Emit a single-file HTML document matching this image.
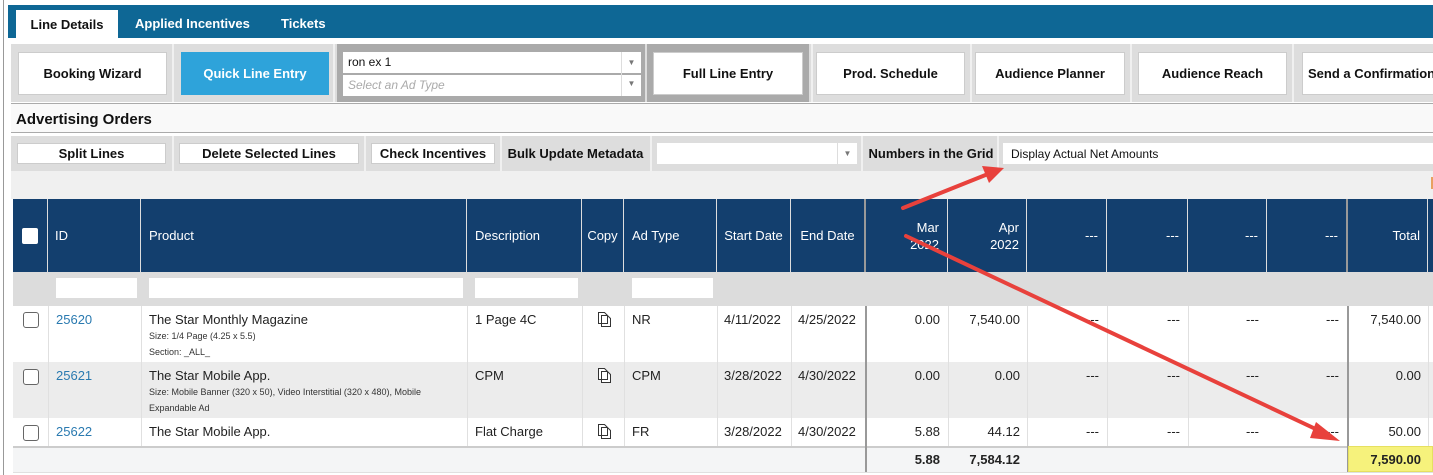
<!DOCTYPE html>
<html><head><meta charset="utf-8"><style>
*{box-sizing:border-box;margin:0;padding:0}
body{width:1433px;height:475px;background:#fff;font-family:"Liberation Sans",sans-serif;position:relative;overflow:hidden;color:#111}
.a{position:absolute}
.btn{position:absolute;background:#fff;border:1px solid #ccc;font-weight:bold;font-size:13px;display:flex;align-items:center;justify-content:center;white-space:nowrap;overflow:hidden}
.lbl{position:absolute;font-weight:bold;font-size:13px;display:flex;align-items:center;justify-content:center;white-space:nowrap}
.hd{position:absolute;top:199px;height:73px;color:#fff;font-size:13px;display:flex;align-items:center;border-right:1px solid #ddd}
.c{position:absolute;font-size:13px;color:#222;white-space:nowrap}
.sm{font-size:9px;color:#333;line-height:16px}
.id{color:#2a7ab0}
.cb{position:absolute;width:16px;height:16px;border:1px solid #666;border-radius:3px;background:#fff}
.vl{position:absolute;width:1px;background:#e0e0e0}
.r{text-align:right}
.fi{position:absolute;top:278px;height:20px;background:#fff}
</style></head><body>
<div class="a" style="left:3px;top:0;width:1px;height:475px;background:#999"></div>
<div class="a" style="left:8px;top:5px;width:1425px;height:33px;background:#0e6795"></div>
<div class="a" style="left:16px;top:10px;width:102px;height:28px;background:#fff;font-weight:bold;font-size:13px;display:flex;align-items:center;justify-content:center">Line Details</div>
<div class="a" style="left:135px;top:16px;color:#fff;font-weight:bold;font-size:13px">Applied Incentives</div>
<div class="a" style="left:281px;top:16px;color:#fff;font-weight:bold;font-size:13px">Tickets</div>

<div class="a" style="left:11px;top:44px;width:1422px;height:58px;background:#ddd"></div>
<div class="a" style="left:172px;top:44px;width:2px;height:58px;background:#f0f0f0"></div>
<div class="a" style="left:333px;top:44px;width:2px;height:58px;background:#f0f0f0"></div>
<div class="btn" style="left:18px;top:52px;width:149px;height:43px">Booking Wizard</div>
<div class="btn" style="left:181px;top:52px;width:148px;height:43px;background:#2ea3da;border-color:#2ea3da;color:#fff">Quick Line Entry</div>
<div class="a" style="left:337px;top:44px;width:308px;height:58px;background:#aaa"></div>
<div class="a" style="left:343px;top:52px;width:298px;height:21px;background:#fff;font-size:12px;padding:3px 5px">ron ex 1</div>
<div class="a" style="left:343px;top:75px;width:298px;height:21px;background:#fff;font-size:12px;padding:3px 5px;color:#aaa;font-style:italic">Select an Ad Type</div>
<div class="a" style="left:621px;top:52px;width:20px;height:44px;border-left:1px solid #ddd;font-size:8px;color:#777;text-align:center;line-height:21px">▼<br>▼</div>
<div class="a" style="left:647px;top:44px;width:162px;height:58px;background:#aaa"></div>
<div class="btn" style="left:653px;top:52px;width:150px;height:43px">Full Line Entry</div>
<div class="btn" style="left:816px;top:52px;width:149px;height:43px">Prod. Schedule</div>
<div class="btn" style="left:975px;top:52px;width:150px;height:43px">Audience Planner</div>
<div class="btn" style="left:1138px;top:52px;width:149px;height:43px">Audience Reach</div>
<div class="btn" style="left:1302px;top:52px;width:140px;height:43px;justify-content:flex-start;padding-left:5px">Send a Confirmation</div>
<div class="a" style="left:970px;top:44px;width:2px;height:58px;background:#f0f0f0"></div>
<div class="a" style="left:1130px;top:44px;width:2px;height:58px;background:#f0f0f0"></div>
<div class="a" style="left:1292px;top:44px;width:2px;height:58px;background:#f0f0f0"></div>
<div class="a" style="left:811px;top:44px;width:2px;height:58px;background:#f0f0f0"></div>

<div class="a" style="left:11px;top:103px;width:1422px;height:1px;background:#aaa"></div>
<div class="a" style="left:11px;top:104px;width:1422px;height:28px;background:#f9f9f9"></div>
<div class="a" style="left:16px;top:111px;font-weight:bold;font-size:15px">Advertising Orders</div>
<div class="a" style="left:11px;top:132px;width:1422px;height:1px;background:#aaa"></div>

<div class="a" style="left:11px;top:136px;width:1422px;height:35px;background:#ddd"></div>
<div class="btn" style="left:17px;top:143px;width:149px;height:21px">Split Lines</div>
<div class="a" style="left:172px;top:136px;width:2px;height:35px;background:#f0f0f0"></div>
<div class="btn" style="left:179px;top:143px;width:180px;height:21px">Delete Selected Lines</div>
<div class="a" style="left:364px;top:136px;width:2px;height:35px;background:#f0f0f0"></div>
<div class="btn" style="left:371px;top:143px;width:124px;height:21px">Check Incentives</div>
<div class="a" style="left:500px;top:136px;width:2px;height:35px;background:#f0f0f0"></div>
<div class="lbl" style="left:503px;top:143px;width:145px;height:21px">Bulk Update Metadata</div>
<div class="a" style="left:650px;top:136px;width:2px;height:35px;background:#f0f0f0"></div>
<div class="a" style="left:657px;top:143px;width:200px;height:21px;background:#fff"></div>
<div class="a" style="left:837px;top:143px;width:20px;height:21px;border-left:1px solid #ddd;font-size:8px;color:#777;text-align:center;line-height:21px">▼</div>
<div class="a" style="left:861px;top:136px;width:2px;height:35px;background:#f0f0f0"></div>
<div class="lbl" style="left:866px;top:143px;width:130px;height:21px">Numbers in the Grid</div>
<div class="a" style="left:997px;top:136px;width:2px;height:35px;background:#f0f0f0"></div>
<div class="a" style="left:1003px;top:143px;width:430px;height:21px;background:#fff;font-size:12px;padding:4px 8px">Display Actual Net Amounts</div>

<div class="a" style="left:11px;top:171px;width:1422px;height:28px;background:#f0f0f0"></div>
<div class="a" style="left:1431px;top:177px;width:2px;height:12px;background:#e8a060"></div>

<div class="a" style="left:13px;top:199px;width:1420px;height:73px;background:#133f6e"></div>
<div class="hd" style="left:13px;width:35px;justify-content:center"><div style="width:16px;height:16px;background:#fff;border-radius:2px"></div></div>
<div class="hd" style="left:48px;width:93px;padding-left:7px">ID</div>
<div class="hd" style="left:141px;width:326px;padding-left:8px">Product</div>
<div class="hd" style="left:467px;width:115px;padding-left:8px">Description</div>
<div class="hd" style="left:582px;width:42px;justify-content:center">Copy</div>
<div class="hd" style="left:624px;width:93px;padding-left:8px">Ad Type</div>
<div class="hd" style="left:717px;width:74px;justify-content:center">Start Date</div>
<div class="hd" style="left:791px;width:75px;justify-content:center;border-right:2px solid #999">End Date</div>
<div class="hd r" style="left:866px;width:82px;justify-content:flex-end;padding-right:8px;line-height:17px">Mar<br>2022</div>
<div class="hd r" style="left:948px;width:79px;justify-content:flex-end;padding-right:7px;line-height:17px">Apr<br>2022</div>
<div class="hd" style="left:1027px;width:80px;justify-content:flex-end;padding-right:8px">---</div>
<div class="hd" style="left:1107px;width:81px;justify-content:flex-end;padding-right:8px">---</div>
<div class="hd" style="left:1188px;width:79px;justify-content:flex-end;padding-right:8px">---</div>
<div class="hd" style="left:1267px;width:81px;justify-content:flex-end;padding-right:8px;border-right:2px solid #999">---</div>
<div class="hd" style="left:1348px;width:80px;justify-content:flex-end;padding-right:7px">Total</div>

<div class="a" style="left:13px;top:272px;width:1420px;height:34px;background:#dcdcdc"></div>
<div class="fi" style="left:56px;width:81px"></div>
<div class="fi" style="left:149px;width:314px"></div>
<div class="fi" style="left:475px;width:103px"></div>
<div class="fi" style="left:632px;width:81px"></div>

<div class="a" style="left:13px;top:306px;width:1420px;height:56px;background:#fff"></div>
<div class="a" style="left:13px;top:362px;width:1420px;height:56px;background:#ececec"></div>
<div class="a" style="left:13px;top:418px;width:1420px;height:28px;background:#fff"></div>
<div class="a" style="left:13px;top:446px;width:1420px;height:2px;background:#ccc"></div>
<div class="a" style="left:13px;top:448px;width:1420px;height:24px;background:#f4f5f6"></div>
<div class="a" style="left:13px;top:472px;width:1420px;height:1px;background:#e0e0e0"></div>

<div class="vl" style="left:48px;top:306px;height:140px"></div>
<div class="vl" style="left:141px;top:306px;height:140px"></div>
<div class="vl" style="left:467px;top:306px;height:140px"></div>
<div class="vl" style="left:582px;top:306px;height:140px"></div>
<div class="vl" style="left:624px;top:306px;height:140px"></div>
<div class="vl" style="left:717px;top:306px;height:140px"></div>
<div class="vl" style="left:791px;top:306px;height:140px"></div>
<div class="vl" style="left:948px;top:306px;height:140px"></div>
<div class="vl" style="left:1027px;top:306px;height:140px"></div>
<div class="vl" style="left:1107px;top:306px;height:140px"></div>
<div class="vl" style="left:1188px;top:306px;height:140px"></div>
<div class="vl" style="left:1428px;top:306px;height:140px"></div>
<div class="a" style="left:865px;top:306px;width:2px;height:166px;background:#999"></div>
<div class="a" style="left:1347px;top:306px;width:2px;height:166px;background:#999"></div>

<div class="cb" style="left:23px;top:312px"></div>
<div class="cb" style="left:23px;top:369px"></div>
<div class="cb" style="left:23px;top:425px"></div>

<div class="c id" style="left:56px;top:312px">25620</div>
<div class="c" style="left:149px;top:312px">The Star Monthly Magazine<div class="sm" style="margin-top:1px">Size: 1/4 Page (4.25 x 5.5)<br>Section: _ALL_</div></div>
<div class="c" style="left:475px;top:312px">1 Page 4C</div>
<div class="c" style="left:632px;top:312px">NR</div>
<div class="c" style="left:724px;top:312px">4/11/2022</div>
<div class="c" style="left:798px;top:312px">4/25/2022</div>
<div class="c r" style="left:866px;width:74px;top:312px">0.00</div>
<div class="c r" style="left:948px;width:72px;top:312px">7,540.00</div>
<div class="c r" style="left:1027px;width:72px;top:312px">---</div>
<div class="c r" style="left:1107px;width:73px;top:312px">---</div>
<div class="c r" style="left:1188px;width:71px;top:312px">---</div>
<div class="c r" style="left:1267px;width:72px;top:312px">---</div>
<div class="c r" style="left:1348px;width:73px;top:312px">7,540.00</div>

<div class="c id" style="left:56px;top:368px">25621</div>
<div class="c" style="left:149px;top:368px">The Star Mobile App.<div class="sm" style="margin-top:1px">Size: Mobile Banner (320 x 50), Video Interstitial (320 x 480), Mobile<br>Expandable Ad</div></div>
<div class="c" style="left:475px;top:368px">CPM</div>
<div class="c" style="left:632px;top:368px">CPM</div>
<div class="c" style="left:724px;top:368px">3/28/2022</div>
<div class="c" style="left:798px;top:368px">4/30/2022</div>
<div class="c r" style="left:866px;width:74px;top:368px">0.00</div>
<div class="c r" style="left:948px;width:72px;top:368px">0.00</div>
<div class="c r" style="left:1027px;width:72px;top:368px">---</div>
<div class="c r" style="left:1107px;width:73px;top:368px">---</div>
<div class="c r" style="left:1188px;width:71px;top:368px">---</div>
<div class="c r" style="left:1267px;width:72px;top:368px">---</div>
<div class="c r" style="left:1348px;width:73px;top:368px">0.00</div>

<div class="c id" style="left:56px;top:424px">25622</div>
<div class="c" style="left:149px;top:424px">The Star Mobile App.</div>
<div class="c" style="left:475px;top:424px">Flat Charge</div>
<div class="c" style="left:632px;top:424px">FR</div>
<div class="c" style="left:724px;top:424px">3/28/2022</div>
<div class="c" style="left:798px;top:424px">4/30/2022</div>
<div class="c r" style="left:866px;width:74px;top:424px">5.88</div>
<div class="c r" style="left:948px;width:72px;top:424px">44.12</div>
<div class="c r" style="left:1027px;width:72px;top:424px">---</div>
<div class="c r" style="left:1107px;width:73px;top:424px">---</div>
<div class="c r" style="left:1188px;width:71px;top:424px">---</div>
<div class="c r" style="left:1267px;width:72px;top:424px">---</div>
<div class="c r" style="left:1348px;width:73px;top:424px">50.00</div>

<svg class="a" style="left:0;top:0" width="1433" height="475">
<g fill="none" stroke="#333" stroke-width="1">
<path d="M598.5 312.5h6l3 3v8h-9z M601.5 315.5h6l3 3v8h-9z" fill="#fff"/>
<path d="M598.5 368.5h6l3 3v8h-9z M601.5 371.5h6l3 3v8h-9z" fill="#fff"/>
<path d="M598.5 424.5h6l3 3v8h-9z M601.5 427.5h6l3 3v8h-9z" fill="#fff"/>
</g>
</svg>

<div class="a" style="left:1348px;top:446px;width:85px;height:26px;background:#f6f27c;border:1px solid #e6e060"></div>
<div class="c r" style="left:866px;width:74px;top:452px;font-weight:bold">5.88</div>
<div class="c r" style="left:948px;width:72px;top:452px;font-weight:bold">7,584.12</div>
<div class="c r" style="left:1348px;width:73px;top:452px;font-weight:bold">7,590.00</div>

<svg class="a" style="left:0;top:0" width="1433" height="475">
<g stroke="#e8413c" stroke-width="4" fill="#e8413c" stroke-linecap="round">
<line x1="903" y1="208" x2="988" y2="174"/>
<polygon points="1004,168 982,166 989,183" stroke="none"/>
<line x1="906" y1="236" x2="1322" y2="432"/>
<polygon points="1340,441 1316,422 1310,438" stroke="none"/>
</g>
</svg>
</body></html>
